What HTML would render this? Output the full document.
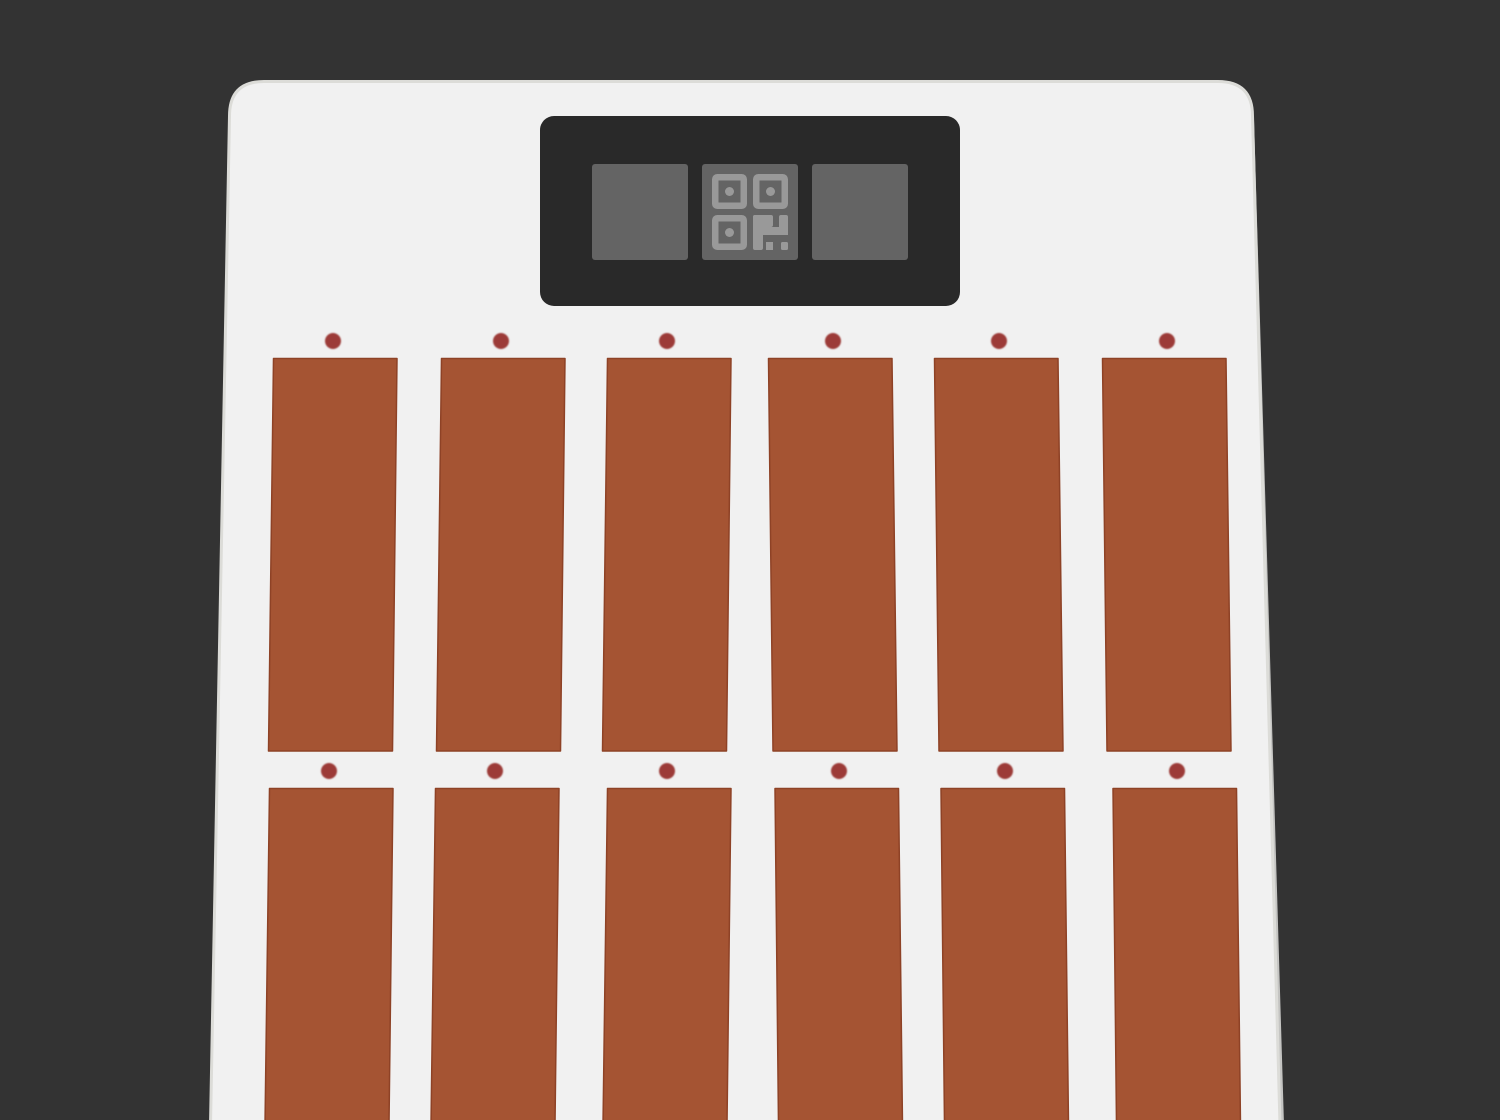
<!DOCTYPE html>
<html><head><style>
html,body{margin:0;padding:0;background:#333333;width:1500px;height:1120px;overflow:hidden}
svg{display:block}
</style></head><body>
<svg width="1500" height="1120" viewBox="0 0 1500 1120" xmlns="http://www.w3.org/2000/svg">
<defs>
<filter id="b" x="-50%" y="-50%" width="200%" height="200%"><feGaussianBlur stdDeviation="0.9"/></filter>
</defs>
<rect width="1500" height="1120" fill="#333333"/>
<path d="M1254,120 L1284,1125 L1278,1125 L1250,120 Z" fill="#c4c4c2"/>
<path d="M264,81.5 L1218,81.5 Q1252.5,81.5 1252.5,116 L1280,1125 L210.5,1125 L229.5,116 Q229.5,81.5 264,81.5 Z" fill="#f1f1f1" stroke="#dcdcd8" stroke-width="3"/>
<rect x="540" y="116" width="420" height="190" rx="14" fill="#292929"/>
<rect x="592" y="164" width="96" height="96" rx="3" fill="#646464"/>
<rect x="702" y="164" width="96" height="96" rx="3" fill="#646464"/>
<rect x="812" y="164" width="96" height="96" rx="3" fill="#646464"/>
<g fill="none" stroke="#999" stroke-width="6.5">
<rect x="715.25" y="177.25" width="28.5" height="28.5" rx="2"/>
<rect x="756.25" y="177.25" width="28.5" height="28.5" rx="2"/>
<rect x="715.25" y="218.25" width="28.5" height="28.5" rx="2"/>
</g>
<g fill="#999">
<circle cx="729.5" cy="191.5" r="4.5"/><circle cx="770.5" cy="191.5" r="4.5"/><circle cx="729.5" cy="232.5" r="4.5"/>
<rect x="753" y="215" width="10" height="35" rx="2"/>
<rect x="753" y="215" width="20" height="12" rx="2"/>
<rect x="779" y="215" width="9" height="20" rx="2"/>
<rect x="753" y="227" width="35" height="8"/>
<rect x="766" y="242" width="7" height="8"/>
<rect x="781" y="242" width="7" height="8" rx="1.5"/>
</g>
<g fill="#a55433" stroke="#8e4226" stroke-width="1.5" stroke-linejoin="round">
<polygon points="273.5,358.5 397,358.5 392.5,751 268.5,751"/>
<polygon points="441.5,358.5 565,358.5 560.5,751 436.5,751"/>
<polygon points="607.5,358.5 731,358.5 726.5,751 602.5,751"/>
<polygon points="768.5,358.5 892,358.5 897,751 773,751"/>
<polygon points="934.5,358.5 1058,358.5 1063,751 939,751"/>
<polygon points="1102.5,358.5 1226,358.5 1231,751 1107,751"/>
<polygon points="269.5,788.5 393,788.5 389,1125 265,1125"/>
<polygon points="435.5,788.5 559,788.5 555,1125 431,1125"/>
<polygon points="607.5,788.5 731,788.5 727,1125 603,1125"/>
<polygon points="775,788.5 898.5,788.5 902.5,1125 778.5,1125"/>
<polygon points="941,788.5 1064.5,788.5 1068.5,1125 944.5,1125"/>
<polygon points="1113,788.5 1236.5,788.5 1240.5,1125 1116.5,1125"/>
</g>
<g fill="#9c3a37" filter="url(#b)">
<circle cx="333" cy="341" r="8"/><circle cx="501" cy="341" r="8"/><circle cx="667" cy="341" r="8"/>
<circle cx="833" cy="341" r="8"/><circle cx="999" cy="341" r="8"/><circle cx="1167" cy="341" r="8"/>
<circle cx="329" cy="771" r="8"/><circle cx="495" cy="771" r="8"/><circle cx="667" cy="771" r="8"/>
<circle cx="839" cy="771" r="8"/><circle cx="1005" cy="771" r="8"/><circle cx="1177" cy="771" r="8"/>
</g>
</svg>
</body></html>
